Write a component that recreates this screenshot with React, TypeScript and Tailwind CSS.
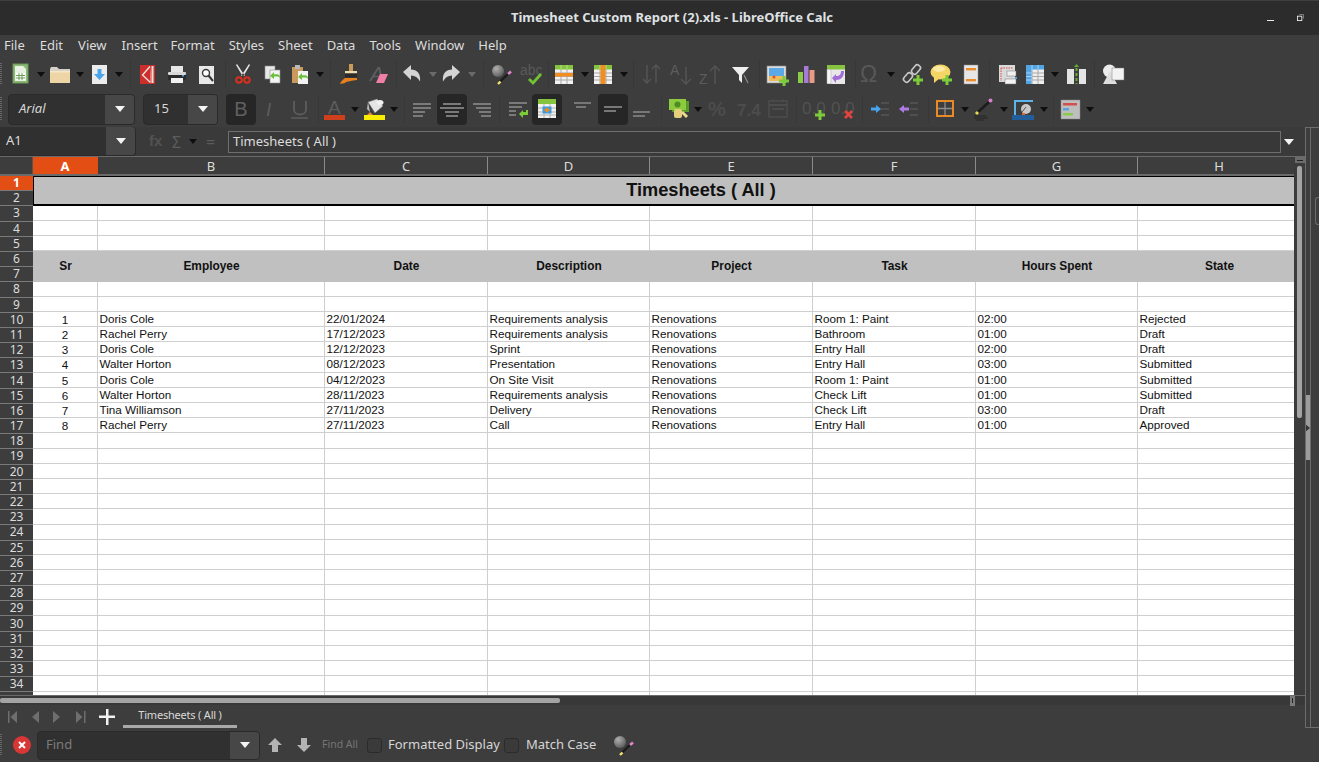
import React from "react";

const UI = "font-['Noto_Sans',sans-serif]";
const CELL = "font-['Liberation_Sans',Arial,sans-serif]";

const S = ({ c = "", children }: { c?: string; children?: React.ReactNode }) => (
  <div className={`flex items-center justify-center w-6 h-6 shrink-0 ${c}`}>{children}</div>
);
const Box = ({ c = "", children }: { c?: string; children?: React.ReactNode }) => (
  <div className={`flex items-center justify-center w-[30px] h-[31px] shrink-0 rounded-[4px] bg-[#262626] ${c}`}>{children}</div>
);
const Sep = ({ c = "" }: { c?: string }) => <div className={`w-px h-[28px] shrink-0 bg-[#383838] ${c}`} />;
const Arrow = ({ c = "", dim = false }: { c?: string; dim?: boolean }) => (
  <div className={`flex items-center justify-center w-2 h-6 shrink-0 ${c}`}>
    <svg width="8" height="5" viewBox="0 0 8 5"><path d="M0 0h8L4 5z" fill={dim ? "#6a6a6a" : "#0e0e0e"} /></svg>
  </div>
);
const I = ({ children }: { children: React.ReactNode }) => (
  <svg width="24" height="24" viewBox="0 0 24 24" className="block">{children}</svg>
);
const Plus = ({ x, y }: { x: number; y: number }) => (
  <path d={`M${x - 1.5} ${y - 5}h3v3.5h3.5v3h-3.5v3.5h-3v-3.5h-3.5v-3h3.5z`} fill="#7ccb3a" />
);
const GArrow = ({ x, y }: { x: number; y: number }) => (
  <path d={`M${x} ${y}l4-4v2.2h3c2 0 3 1.5 3 4 -1-1.3-2-1.6-3-1.6h-3v2.4z`} fill="#6cbf3a" />
);
const TableBase = () => (
  <>
    <rect x="3" y="3" width="18" height="19" fill="#f2f2f2" />
    <path d="M3 11h18M3 14.5h18M3 18h18M9 7v15M15 7v15" stroke="#a8a8a8" strokeWidth="1" />
    <rect x="3" y="3" width="18" height="4.5" fill="#86c440" />
    <path d="M9 3v4.5M15 3v4.5" stroke="#b6e08a" />
  </>
);
const Lines = ({ y, x1, x2, x3, x4, x5, x6, color = "#7a7a7a" }: { y: number; x1: number; x2: number; x3: number; x4: number; x5: number; x6: number; color?: string }) => (
  <path d={`M${x1} ${y}H${x2}M${x3} ${y + 4}H${x4}M${x5} ${y + 8}H${x6}`} stroke={color} strokeWidth="2" />
);
const DimText = ({ t, x, y, s = 15, w = 400, it = false, f = "#5c5c5c" }: { t: string; x: number; y: number; s?: number; w?: number; it?: boolean; f?: string }) => (
  <text x={x} y={y} fontSize={s} fontWeight={w} fontStyle={it ? "italic" : "normal"} fill={f} fontFamily="'Liberation Sans',sans-serif">{t}</text>
);

/* toolbar 1 icons */
const NewDoc = () => <I><rect x="5" y="2" width="15" height="19" fill="#8cb977" stroke="#6d9a58" /><path d="M7 4h8l3 3v12H7z" fill="#e9f1e2" /><rect x="8" y="11" width="9" height="7" fill="#fff" /><path d="M8 13.5h9M8 16h9M11 11v7M14 11v7" stroke="#6b9a55" /></I>;
const Folder = () => <I><path d="M2 7l1-2h6l2 2h11v4H2z" fill="#d6d2c8" /><path d="M2 9h20v12H2z" fill="#eed5a5" /><path d="M2 9h20v1.5H2z" fill="#f7e7c6" /></I>;
const Save = () => <I><rect x="5" y="3" width="15" height="19" fill="#ececec" /><path d="M10.5 7h4v5H18l-5.5 6L7 12h3.500z" fill="#4aa5ec" /></I>;
const Pdf = () => <I><rect x="5" y="3" width="15" height="19" fill="#cc2f2b" /><path d="M15 4.500L7.500 13l8 7.500" fill="none" stroke="#f4dcd8" strokeWidth="1.400" /><path d="M17.500 4v17" stroke="#f4dcd8" strokeWidth="2" /><path d="M15 4.500l2 16-1.500 0z" fill="#e89a94" /></I>;
const Printer = () => <I><rect x="6" y="4" width="12" height="6" fill="#e6e6e6" /><rect x="3" y="10" width="18" height="8" rx="1.500" fill="#2b2b2b" /><rect x="3" y="10" width="18" height="3" rx="1" fill="#d8d8d8" /><rect x="17" y="13" width="2" height="1.500" fill="#4aa5ec" /><rect x="6" y="16" width="12" height="5" fill="#f0f0f0" /></I>;
const Preview = () => <I><rect x="5" y="4" width="15" height="18" fill="#e8e8e8" /><circle cx="12" cy="11" r="3.500" fill="#fff" stroke="#3a3a3a" strokeWidth="1.400" /><path d="M14.500 13.500L19 19" stroke="#333" strokeWidth="2" /></I>;
const Cut = () => <I><path d="M6 2l8 12h-2.500L5 3zM18 2l-8 12h2.500L19 3z" fill="#e4e4e4" /><circle cx="8" cy="18" r="2.800" fill="none" stroke="#d8301c" strokeWidth="2" /><circle cx="16" cy="18" r="2.800" fill="none" stroke="#d8301c" strokeWidth="2" /></I>;
const Copy = () => <I><rect x="5" y="4" width="10" height="13" fill="#e8e8e8" stroke="#8a8a8a" strokeWidth=".6" /><rect x="10" y="8" width="10" height="13" fill="#f4f4f4" stroke="#8a8a8a" strokeWidth=".6" /><GArrow x={10} y={14} /></I>;
const Paste = () => <I><rect x="4" y="5" width="11" height="16" fill="#c99a5c" /><rect x="7" y="3" width="5" height="4" fill="#b8b8b8" /><rect x="10" y="9" width="10" height="13" fill="#f2f2f2" /><GArrow x={10} y={15} /></I>;
const Clone = () => <I><rect x="12" y="2" width="4" height="7" fill="#c89c56" /><rect x="8" y="9" width="12" height="2.500" fill="#eedcb0" /><rect x="8" y="11.500" width="12" height="4" fill="#2a2a2a" /><path d="M8 16h12v2c-5 1-10 1-12 3 -2 .5-4 1-5 .5 1-2 3-4 5-5.500z" fill="#e8801f" /></I>;
const Clear = () => <I><DimText t="A" x={4} y={19} s={21} it f="#5e5e5e" /><path d="M14 12h8l-4 9h-8z" fill="#ef7fa8" /></I>;
const Undo = () => <I><path d="M3 10l8-7v4.500c6 0 10 4 9 12 -2-4-5-6-9-6v4.500z" fill="#d4d4d4" /></I>;
const Redo = () => <I><path d="M21 10l-8-7v4.500c-6 0-10 4-9 12 2-4 5-6 9-6v4.500z" fill="#d4d4d4" /></I>;
const Wand = () => <I><defs><radialGradient id="ball" cx=".35" cy=".3" r=".8"><stop offset="0" stopColor="#b0b0b0" /><stop offset="1" stopColor="#555" /></radialGradient></defs><circle cx="9" cy="9" r="6" fill="url(#ball)" /><path d="M10.500 20L20 11" stroke="#1c1c1c" strokeWidth="2.400" /><path d="M9 22l2.500-2.500" stroke="#f0e070" strokeWidth="2.400" /><path d="M19 12l3-2.500" stroke="#e586cc" strokeWidth="2.600" /></I>;
const Spell = () => <I><DimText t="abc" x={0} y={13} s={14} f="#5a5a5a" /><path d="M9 17l4 4 8-9" fill="none" stroke="#72c234" strokeWidth="2.800" /></I>;
const RowIc = () => <I><TableBase /><rect x="3" y="11" width="18" height="3.500" fill="#f28d1f" /></I>;
const ColIc = () => <I><TableBase /><rect x="9.500" y="3" width="5" height="19" fill="#f28d1f" /></I>;
const Sort = () => <I><path d="M7 3v18M3 17l4 4 4-4M16 21V3M12 7l4-4 4 4" fill="none" stroke="#555" strokeWidth="1.400" /></I>;
const Asc = () => <I><DimText t="A" x={0} y={13} s={14} /><path d="M16 5v17M11 17l5 5 5-5" fill="none" stroke="#555" strokeWidth="1.400" /></I>;
const Desc = () => <I><DimText t="Z" x={0} y={22} s={14} /><path d="M16 22V4M11 9l5-5 5 5" fill="none" stroke="#555" strokeWidth="1.400" /></I>;
const Filter = () => <I><path d="M3 5h17l-7 8v8l-3-3v-5z" fill="#efefef" /><path d="M15 13l4 8" stroke="#8a8a8a" strokeWidth="1.200" /></I>;
const ImageIc = () => <I><rect x="2" y="4" width="19" height="17" fill="#dcdcdc" stroke="#8a8a8a" strokeWidth=".6" /><rect x="4" y="6" width="15" height="8" fill="#5ba9e6" /><rect x="4" y="14" width="15" height="5" fill="#edbc5e" /><circle cx="9" cy="15" r="1.500" fill="#e0552e" /><Plus x={19} y={19} /></I>;
const Chart = () => <I><rect x="4" y="10" width="5" height="11" fill="#8ccb4a" /><rect x="10" y="4" width="4.500" height="17" fill="#a77cd8" /><rect x="15.500" y="8" width="5" height="13" fill="#e89a84" /></I>;
const Pivot = () => <I><rect x="3" y="3" width="18" height="19" fill="#e8e8e8" /><rect x="3" y="3" width="18" height="4.500" fill="#86c440" /><rect x="3" y="7.500" width="4" height="14" fill="#f6f6f6" stroke="#aaa" strokeWidth=".5" /><path d="M8 16l4-4v2c4 0 5-2 5-5h3c0 6-3 9-8 9v3z" fill="#a16fd6" /></I>;
const Omega = () => <I><DimText t="Ω" x={1} y={20} s={23} f="#585858" /></I>;
const LinkIc = () => (
  <I>
    <rect x="13" y="2.500" width="6" height="10" rx="2.500" transform="rotate(40 16 7.500)" fill="none" stroke="#c8c8c8" strokeWidth="1.600" />
    <rect x="5" y="10.500" width="6" height="10" rx="2.500" transform="rotate(40 8 15.500)" fill="none" stroke="#c8c8c8" strokeWidth="1.600" />
    <Plus x={18} y={18} />
  </I>
);
const Comment = () => <I><ellipse cx="11.500" cy="10" rx="10" ry="7.500" fill="#f4d565" /><path d="M5 15v6l6-5z" fill="#f4d565" /><ellipse cx="10" cy="7" rx="6" ry="3" fill="#fbeaa6" /><Plus x={18} y={18} /></I>;
const HeaderIc = () => <I><rect x="5" y="3" width="14" height="19" fill="#e6e6e6" stroke="#8a8a8a" strokeWidth=".5" /><rect x="7" y="6" width="10" height="2.400" fill="#ea8d2c" /><rect x="7" y="17" width="10" height="2.400" fill="#ea8d2c" /></I>;
const PrintArea = () => <I><rect x="3" y="3" width="16" height="17" fill="#dadada" /><path d="M5 6h12M5 6v13" stroke="#d04a4a" strokeDasharray="1.500 1" /><rect x="11" y="9" width="9" height="5" fill="#f0f0f0" stroke="#777" strokeWidth=".5" /><rect x="9" y="17" width="11" height="5" fill="#f4f4f4" stroke="#777" strokeWidth=".5" /><rect x="19" y="15" width="2" height="2" fill="#4aa5ec" /></I>;
const Freeze = () => <I><rect x="3" y="3" width="18" height="19" fill="#eee" /><path d="M3 11h18M3 14.500h18M3 18h18M9 3v19M15 3v19" stroke="#a8a8a8" /><rect x="3" y="3" width="18" height="4.500" fill="#53a4e2" /><rect x="3" y="3" width="5.500" height="19" fill="#53a4e2" /><path d="M3 11h6M3 14.500h6M3 18h6M9 3v5M15 3v5" stroke="#a5d2f4" /></I>;
const Split = () => <I><rect x="3" y="7" width="7" height="15" fill="#e4e4e4" /><rect x="15" y="7" width="7" height="15" fill="#e4e4e4" /><path d="M12.500 6v16" stroke="#66b02f" strokeWidth="2" strokeDasharray="3 2" /><path d="M10 5l2.500-3 2.500 3z" fill="#66b02f" /></I>;
const Shapes = () => <I><circle cx="8.500" cy="9" r="6.500" fill="#ececec" /><path d="M9 9l7 13H2z" fill="#dedede" /><rect x="11" y="6" width="12" height="12" fill="#f3f3f3" stroke="#777" strokeWidth=".5" /></I>;

/* toolbar 2 icons */
const Bold = () => <span className={`${CELL} text-[20px] leading-none text-[#606060]`}>B</span>;
const ItalicIc = () => <I><DimText t="I" x={8} y={19} s={19} it f="#5c5c5c" /></I>;
const UnderIc = () => <I><path d="M6 4v9c0 6 12 6 12 0V4" fill="none" stroke="#5c5c5c" strokeWidth="1.800" /><path d="M3 21h17" stroke="#5c5c5c" strokeWidth="1.500" /></I>;
const FontColor = () => <I><DimText t="A" x={5} y={17} s={19} f="#5c5c5c" /><rect x="1" y="18" width="21" height="5" fill="#d03f1c" /></I>;
const BgColor = () => <I><path d="M6 5l9-3 6 7-8 7z" fill="#e4e4e4" stroke="#777" strokeWidth=".6" /><ellipse cx="18" cy="5.500" rx="3.500" ry="2.500" fill="#f2f2f2" /><path d="M6 5l-1 7 3 3z" fill="#bdbdbd" /><path d="M8 15l3 3H5z" fill="#e08a3a" /><rect x="2" y="18" width="21" height="5" fill="#f8ec00" /></I>;
const AlL = () => <I><Lines y={7} x1={3} x2={21} x3={3} x4={21} x5={3} x6={15} /><path d="M3 19h10" stroke="#7a7a7a" strokeWidth="2" /></I>;
const AlC = () => <I><Lines y={7} x1={3} x2={21} x3={0} x4={24} x5={5} x6={19} /><path d="M6 19h12" stroke="#7a7a7a" strokeWidth="2" /></I>;
const AlR = () => <I><Lines y={7} x1={3} x2={21} x3={6} x4={21} x5={9} x6={21} /><path d="M11 19h10" stroke="#7a7a7a" strokeWidth="2" /></I>;
const Wrap = () => <I><Lines y={6} x1={3} x2={21} x3={3} x4={16} x5={3} x6={10} /><path d="M3 18h7" stroke="#7a7a7a" strokeWidth="2" /><path d="M13 17l4-4v2h3v-2h2v5h-5v3z" fill="#7ccb3a" /></I>;
const Merge = () => <I><rect x="3" y="2" width="18" height="19" fill="#f2f2f2" /><path d="M3 11h18M3 15h18M3 18h18M9 7v14M15 7v14" stroke="#b0b0b0" /><rect x="3" y="2" width="18" height="5" fill="#86c440" /><rect x="7.500" y="9.500" width="9" height="7" fill="#3d9ae0" /><path d="M12 10.500l-3 2.500 3 2.500zM12 10.500l3 2.500-3 2.500z" fill="#f28a1e" /></I>;
const VTop = () => <I><path d="M3 6h17M5 10h10" stroke="#777" strokeWidth="2" /></I>;
const VMid = () => <I><path d="M3 10h18M3 14h12" stroke="#777" strokeWidth="2" /></I>;
const VBot = () => <I><path d="M3 15h17M3 19h12" stroke="#777" strokeWidth="2" /></I>;
const Currency = () => <I><rect x="6" y="4" width="17" height="11" fill="#5a9a2a" /><rect x="3" y="2" width="17" height="11" fill="#8ccb3e" /><circle cx="11.500" cy="7.500" r="3" fill="#4f8c22" /><rect x="8" y="12" width="8" height="9" rx="2" fill="#e6cf7c" /><path d="M16 15l5 5" stroke="#e8d890" strokeWidth="3" /></I>;
const Percent = () => <I><DimText t="%" x={1} y={19} s={20} w={700} f="#4c4c4c" /></I>;
const Num = () => <I><DimText t="7.4" x={0} y={19} s={17} w={700} f="#4c4c4c" /></I>;
const DateIc = () => <I><rect x="3" y="4" width="18" height="16" fill="none" stroke="#4c4c4c" strokeWidth="1.500" /><path d="M3 8h18" stroke="#4c4c4c" strokeWidth="2" /><path d="M6 11h12v2H6z" fill="#4c4c4c" /><path d="M7 2v3M17 2v3" stroke="#4c4c4c" /></I>;
const AddDec = () => <I><DimText t="0.0" x={0} y={17} s={17} f="#525252" /><Plus x={18} y={18} /></I>;
const DelDec = () => <I><DimText t="0.0" x={0} y={17} s={17} f="#525252" /><path d="M14 14l7 7M21 14l-7 7" stroke="#e0443c" strokeWidth="2.600" /></I>;
const Indent = () => <I><path d="M13 6h8M13 12h8M13 18h8" stroke="#565656" strokeWidth="1.500" /><path d="M3 10.500h5V8l5 4-5 4v-2.500H3z" fill="#45a5ee" /></I>;
const Outdent = () => <I><path d="M13 6h8M13 12h8M13 18h8" stroke="#565656" strokeWidth="1.500" /><path d="M12 10.500H7V8l-5 4 5 4v-2.500h5z" fill="#b07ae6" /></I>;
const Borders = () => <I><rect x="4" y="4" width="16" height="15" fill="none" stroke="#ea8a25" strokeWidth="2" /><path d="M12 5v13M5 11.500h14" stroke="#8c8c8c" strokeWidth="1.300" /></I>;
const Pen = () => <I><path d="M6 16L18 5" stroke="#1c1c1c" strokeWidth="2.500" /><circle cx="19.500" cy="3.500" r="2" fill="#d97ed0" /><path d="M5 17l2-2" stroke="#e8d850" strokeWidth="3" /><path d="M3 19h12M3 21h14M5 23h8" stroke="#262626" /></I>;
const BorderColor = () => <I><path d="M3 19V4h18" fill="none" stroke="#5bb4ec" strokeWidth="2" /><circle cx="14" cy="12" r="5" fill="#c8c8c8" /><path d="M10 15l4-5" stroke="#555" /><rect x="0" y="18" width="22" height="5" fill="#235e9c" /><path d="M10 16h3v2h-3z" fill="#d9682a" /></I>;
const Cond = () => <I><rect x="3" y="3" width="19" height="19" fill="#bebebe" stroke="#888" strokeWidth=".5" /><rect x="5" y="6" width="14" height="2.500" fill="#d24f4f" /><rect x="5" y="11" width="6" height="2.500" fill="#5aa5e0" /><rect x="5" y="16" width="10" height="2.500" fill="#8ccb4a" /></I>;

const White = () => <svg width="10" height="6" viewBox="0 0 10 6"><path d="M0 0h10L5 6z" fill="#f4f4f4" /></svg>;

const Combo = ({ w, arrowW, label, italic = false, ml = "" }: { w: string; arrowW: string; label: string; italic?: boolean; ml?: string }) => (
  <div className={`flex h-[31px] shrink-0 rounded-[4px] border border-[#2a2a2a] bg-[#303030] overflow-hidden ${w} ${ml}`}>
    <div className={`flex-1 flex items-center pl-[10px] text-[13px] text-[#d6d6d6] ${italic ? "italic" : ""} ${UI}`}>{label}</div>
    <div className={`flex items-center justify-center bg-[#474747] ${arrowW}`}><White /></div>
  </div>
);

const Grip = () => (
  <div className="absolute left-0 top-[6px] bottom-[6px] w-[2px] bg-[repeating-linear-gradient(to_bottom,#666_0,#666_1px,transparent_1px,transparent_2px)]" />
);

const COLS = "grid grid-cols-[65px_227px_163px_162px_163px_163px_162px_163px]";
const LETTERS = ["A", "B", "C", "D", "E", "F", "G", "H"];
const HEAD = ["Sr", "Employee", "Date", "Description", "Project", "Task", "Hours Spent", "State"];
const DATA = [
  ["1", "Doris Cole", "22/01/2024", "Requirements analysis", "Renovations", "Room 1: Paint", "02:00", "Rejected"],
  ["2", "Rachel Perry", "17/12/2023", "Requirements analysis", "Renovations", "Bathroom", "01:00", "Draft"],
  ["3", "Doris Cole", "12/12/2023", "Sprint", "Renovations", "Entry Hall", "02:00", "Draft"],
  ["4", "Walter Horton", "08/12/2023", "Presentation", "Renovations", "Entry Hall", "03:00", "Submitted"],
  ["5", "Doris Cole", "04/12/2023", "On Site Visit", "Renovations", "Room 1: Paint", "01:00", "Submitted"],
  ["6", "Walter Horton", "28/11/2023", "Requirements analysis", "Renovations", "Check Lift", "01:00", "Submitted"],
  ["7", "Tina Williamson", "27/11/2023", "Delivery", "Renovations", "Check Lift", "03:00", "Draft"],
  ["8", "Rachel Perry", "27/11/2023", "Call", "Renovations", "Entry Hall", "01:00", "Approved"],
];

const BlankRow = ({ n }: { n: number }) => (
  <div className={`${COLS} h-[15.2px] shrink-0`}>
    {LETTERS.map((l) => <div key={l + n} className="border-r border-b border-[#cfcfcf]" />)}
  </div>
);

const Check = () => <div className="w-[15px] h-[15px] shrink-0 rounded-[3px] border border-[#2b2b2b] bg-[#3a3a3a]" />;

export default function App() {
  const rowNums = Array.from({ length: 34 }, (_, i) => i + 1);
  return (
    <div className={`w-[1319px] h-[762px] overflow-hidden flex flex-col bg-[#3d3d3d] ${UI}`}>
      {/* title bar */}
      <div className="h-[35px] shrink-0 relative flex items-center justify-center pl-[25px] bg-[#2c2c2c] border-t border-[#3f3f3f]">
        <span className="text-[13px] font-bold text-[#dfe1e3]">Timesheet Custom Report (2).xls - LibreOffice Calc</span>
        <div className="absolute right-[15px] top-[13px] flex items-center gap-[23px]">
          <div className="w-[7px] h-px bg-[#e8e8e8] mt-[6px]" />
          <svg width="7" height="7" viewBox="0 0 8 8" className="block"><path d="M2.500.5h5v5" fill="none" stroke="#888" /><rect x=".5" y="2.500" width="5" height="5" fill="none" stroke="#eee" /></svg>
        </div>
      </div>
      {/* menu */}
      <div className="h-[22px] shrink-0 flex items-center pl-[4px] text-[13px] text-[#dcdcdc] bg-[#3d3d3d]">
        <span>File</span>
        <span className="ml-[15px]">Edit</span>
        <span className="ml-[15px]">View</span>
        <span className="ml-[15px]">Insert</span>
        <span className="ml-[13px]">Format</span>
        <span className="ml-[14px]">Styles</span>
        <span className="ml-[14px]">Sheet</span>
        <span className="ml-[14px]">Data</span>
        <span className="ml-[14px]">Tools</span>
        <span className="ml-[14px]">Window</span>
        <span className="ml-[14px]">Help</span>
      </div>
      {/* toolbar 1 */}
      <div className="h-[34px] shrink-0 relative flex items-center">
        <Grip />
        <S c="ml-[8px]"><NewDoc /></S><Arrow c="ml-[5px]" />
        <S c="ml-[3px]"><Folder /></S><Arrow c="ml-[4px]" />
        <S c="ml-[3px]"><Save /></S><Arrow c="ml-[4px]" />
        <Sep c="ml-[7px]" />
        <S c="ml-[4px]"><Pdf /></S>
        <S c="ml-[6px]"><Printer /></S>
        <S c="ml-[5px]"><Preview /></S>
        <Sep c="ml-[7px]" />
        <S c="ml-[5px]"><Cut /></S>
        <S c="ml-[5px]"><Copy /></S>
        <S c="ml-[4px]"><Paste /></S><Arrow c="ml-[4px]" />
        <Sep c="ml-[6px]" />
        <S c="ml-[6px]"><Clone /></S>
        <S c="ml-[5px]"><Clear /></S>
        <Sep c="ml-[6px]" />
        <S c="ml-[3px]"><Undo /></S><Arrow c="ml-[5px]" dim />
        <S c="ml-[2px]"><Redo /></S><Arrow c="ml-[5px]" dim />
        <Sep c="ml-[7px]" />
        <S c="ml-[5px]"><Wand /></S>
        <S c="ml-[7px]"><Spell /></S>
        <Sep c="ml-[4px]" />
        <S c="ml-[3px]"><RowIc /></S><Arrow c="ml-[5px]" />
        <S c="ml-[2px]"><ColIc /></S><Arrow c="ml-[5px]" />
        <Sep c="ml-[5px]" />
        <S c="ml-[6px]"><Sort /></S>
        <S c="ml-[6px]"><Asc /></S>
        <S c="ml-[5px]"><Desc /></S>
        <S c="ml-[6px]"><Filter /></S>
        <Sep c="ml-[6px]" />
        <S c="ml-[5px]"><ImageIc /></S>
        <S c="ml-[5px]"><Chart /></S>
        <S c="ml-[6px]"><Pivot /></S>
        <Sep c="ml-[7px]" />
        <S c="ml-[3px]"><Omega /></S><Arrow c="ml-[4px]" />
        <S c="ml-[5px]"><LinkIc /></S>
        <S c="ml-[5px]"><Comment /></S>
        <S c="ml-[6px]"><HeaderIc /></S>
        <Sep c="ml-[6px]" />
        <S c="ml-[6px]"><PrintArea /></S>
        <S c="ml-[3px]"><Freeze /></S><Arrow c="ml-[4px]" />
        <S c="ml-[5px]"><Split /></S>
        <Sep c="ml-[6px]" />
        <S c="ml-[6px]"><Shapes /></S>
      </div>
      {/* toolbar 2 */}
      <div className="h-[36px] shrink-0 relative flex items-center">
        <Grip />
        <Combo w="w-[127px]" arrowW="w-[29px]" label="Arial" italic ml="ml-[8px]" />
        <Combo w="w-[75px]" arrowW="w-[29px]" label="15" ml="ml-[8px]" />
        <Box c="ml-[8px]"><Bold /></Box>
        <S c="ml-[2px]"><ItalicIc /></S>
        <S c="ml-[6px]"><UnderIc /></S>
        <Sep c="ml-[6px]" />
        <S c="ml-[4px]"><FontColor /></S><Arrow c="ml-[4px]" />
        <S c="ml-[3px]"><BgColor /></S><Arrow c="ml-[4px]" />
        <Sep c="ml-[6px]" />
        <S c="ml-[5px]"><AlL /></S>
        <Box c="ml-[3px]"><AlC /></Box>
        <S c="ml-[3px]"><AlR /></S>
        <Sep c="ml-[5px]" />
        <S c="ml-[6px]"><Wrap /></S>
        <Box c="ml-[2px]"><Merge /></Box>
        <S c="ml-[9px]"><VTop /></S>
        <Box c="ml-[3px]"><VMid /></Box>
        <S c="ml-[2px]"><VBot /></S>
        <Sep c="ml-[7px]" />
        <S c="ml-[4px]"><Currency /></S><Arrow c="ml-[4px]" />
        <S c="ml-[5px]"><Percent /></S>
        <S c="ml-[6px]"><Num /></S>
        <S c="ml-[5px]"><DateIc /></S>
        <Sep c="ml-[6px]" />
        <S c="ml-[5px]"><AddDec /></S>
        <S c="ml-[5px]"><DelDec /></S>
        <Sep c="ml-[7px]" />
        <S c="ml-[5px]"><Indent /></S>
        <S c="ml-[5px]"><Outdent /></S>
        <Sep c="ml-[7px]" />
        <S c="ml-[4px]"><Borders /></S><Arrow c="ml-[4px]" />
        <S c="ml-[2px]"><Pen /></S><Arrow c="ml-[5px]" />
        <S c="ml-[4px]"><BorderColor /></S><Arrow c="ml-[4px]" />
        <Sep c="ml-[5px]" />
        <S c="ml-[4px]"><Cond /></S><Arrow c="ml-[4px]" />
      </div>
      {/* body */}
      <div className="flex-1 min-h-0 flex">
        <div className="w-[1305px] flex flex-col">
          {/* formula bar */}
          <div className="h-[30px] shrink-0 flex items-center border-b border-[#6a6a6a] bg-[#3a3a3a]">
            <div className="w-[136px] h-[29px] flex rounded-r-[4px] border-r border-b border-[#2a2a2a] bg-[#303030] overflow-hidden">
              <div className="flex-1 flex items-center pl-[6px] text-[13px] text-[#dcdcdc]">A1</div>
              <div className="w-[29px] flex items-center justify-center bg-[#474747]"><White /></div>
            </div>
            <div className="w-[92px] flex items-center">
              <span className={`ml-[13px] w-[16px] text-[15px] font-bold text-[#525252] ${CELL}`}>fx</span>
              <span className="ml-[7px] w-[14px] text-[16px] text-[#5c5c5c]">Σ</span>
              <Arrow c="ml-[3px]" />
              <span className="ml-[9px] text-[16px] text-[#5c5c5c]">=</span>
            </div>
            <div className="w-[1053px] h-[22px] flex items-center pl-[4px] text-[13px] text-[#dcdcdc] border border-[#6e6e6e] bg-[#383838]">Timesheets ( All )</div>
            <div className="ml-[3px]"><White /></div>
          </div>
          {/* sheet */}
          <div className="h-[538px] shrink-0 flex overflow-hidden">
            <div className="w-[1294px] flex flex-col">
              {/* col header */}
              <div className="h-[19px] shrink-0 flex border-b-2 border-[#6a6a6a] overflow-hidden">
                <div className="w-[30px] h-[18px] border-r border-[#555] ml-[3px] bg-[#3d3d3d]" />
                <div className={`${COLS} flex-1 min-w-0`}>
                  {LETTERS.map((l, i) => (
                    <div key={l} className={`flex items-center justify-center text-[13px] border-r border-[#8a8a8a] ${i === 0 ? "bg-[#e34e15] text-white font-bold border-[#e34e15]" : "text-[#dcdcdc]"}`}>{l}</div>
                  ))}
                </div>
              </div>
              <div className="flex-1 min-h-0 flex">
                {/* row header */}
                <div className="w-[33px] shrink-0 flex flex-col">
                  {rowNums.map((n) => (
                    <div key={n} className={`h-[15.2px] shrink-0 flex items-center justify-center text-[12px] leading-none border-b border-[#7a7a7a] ${n === 1 ? "bg-[#e34e15] text-white font-bold" : "bg-[#3d3d3d] text-[#dcdcdc]"}`}>{n}</div>
                  ))}
                </div>
                {/* cells */}
                <div className={`flex-1 min-w-0 bg-white flex flex-col overflow-hidden ${CELL} text-black`}>
                  <div className="h-[29.6px] shrink-0 flex items-center justify-center pl-[74px] bg-[#bfbfbf] border-l border-t border-black border-b-2 text-[18.2px] font-bold text-[#111]">Timesheets ( All )</div>
                  {[3, 4, 5].map((n) => <BlankRow key={n} n={n} />)}
                  <div className={`${COLS} h-[30.4px] shrink-0 bg-[#c0c0c0] text-[11.9px] font-bold text-[#111]`}>
                    {HEAD.map((h) => <div key={h} className="flex items-center justify-center pt-[1px]">{h}</div>)}
                  </div>
                  {[8, 9].map((n) => <BlankRow key={n} n={n} />)}
                  {DATA.map((r) => (
                    <div key={r[0]} className={`${COLS} h-[15.2px] shrink-0 text-[11.7px] leading-[14px] text-[#111]`}>
                      {r.map((c, i) => (
                        <div key={i} className={`border-r border-b border-[#cfcfcf] overflow-hidden whitespace-nowrap ${i === 0 ? "text-center pt-[1px]" : "pl-[1.5px]"}`}>{c}</div>
                      ))}
                    </div>
                  ))}
                  {Array.from({ length: 18 }, (_, i) => <BlankRow key={i + 18} n={i + 18} />)}
                </div>
              </div>
            </div>
            {/* vertical scrollbar */}
            <div className="w-[11px] shrink-0 flex flex-col items-center bg-[#3b3b3b]">
              <div className="w-[10px] h-[6px] flex items-center justify-center bg-[#6b6b6b]"><div className="w-[6px] h-px bg-[#222]" /></div>
              <div className="w-[5px] h-[252px] mt-[3px] rounded-[2px] bg-[#a4a4a4]" />
            </div>
          </div>
          {/* horizontal scrollbar */}
          <div className="h-[10px] shrink-0 flex items-center bg-[#383838] border-t border-[#6a6a6a]">
            <div className="w-[560px] h-[5px] rounded-[2px] bg-[#a4a4a4]" />
            <div className="ml-[730px] w-[5px] h-[10px] flex items-center justify-center bg-[#7a7a7a]"><div className="w-px h-[5px] bg-[#222]" /></div>
          </div>
          {/* tabs */}
          <div className="flex-1 min-h-0 flex items-center">
            <svg width="14" height="14" viewBox="0 0 14 14" className="ml-[6px]"><path d="M2 1h1.500v12H2zM11 1v12L4.500 7z" fill="#6e6e6e" /></svg>
            <svg width="10" height="14" viewBox="0 0 10 14" className="ml-[10px]"><path d="M9 1v12L2 7z" fill="#6e6e6e" /></svg>
            <svg width="10" height="14" viewBox="0 0 10 14" className="ml-[12px]"><path d="M1 1v12l7-6z" fill="#6e6e6e" /></svg>
            <svg width="14" height="14" viewBox="0 0 14 14" className="ml-[11px]"><path d="M3 1v12l6.500-6zM11 1h1.500v12H11z" fill="#6e6e6e" /></svg>
            <svg width="16" height="16" viewBox="0 0 16 16" className="ml-[12px]"><path d="M7 0h2.500v6.500H16V9H9.500v7H7V9H0V6.500h7z" fill="#f2f2f2" /></svg>
            <div className="ml-[8px] w-[114px] h-full flex items-center justify-center text-[11px] tracking-[-0.2px] text-[#d8d8d8] border-b-[3px] border-[#a8a8a8]">Timesheets ( All )</div>
          </div>
        </div>
        {/* right strip */}
        <div className="w-[14px] shrink-0 h-[601px] flex border-t border-l border-b border-[#6c6c6c]">
          <div className="w-[5px] h-full flex flex-col border-r border-[#6c6c6c]">
            <div className="h-[267px] shrink-0" />
            <div className="h-[65px] shrink-0 flex items-center bg-[#9c9c9c]">
              <svg width="5" height="8" viewBox="0 0 5 8"><path d="M0 0v8l5-4z" fill="#333" /></svg>
            </div>
          </div>
          <div className="flex-1 flex flex-col items-end">
            <div className="mt-[69px] w-[4px] h-[28px] rounded-l-[3px] border-l border-t border-b border-[#6c6c6c]" />
          </div>
        </div>
      </div>
      {/* find bar */}
      <div className="h-[34px] shrink-0 relative flex items-center text-[13px]">
        <Grip />
        <svg width="18" height="18" viewBox="0 0 18 18" className="ml-[13px] shrink-0"><circle cx="9" cy="9" r="9" fill="#d93636" /><path d="M6 6l6 6M12 6l-6 6" stroke="#fff" strokeWidth="2" /></svg>
        <div className="ml-[6px] w-[223px] h-[29px] flex rounded-[4px] border border-[#2a2a2a] bg-[#303030] overflow-hidden">
          <div className="flex-1 flex items-center pl-[8px] text-[#7c7c7c]">Find</div>
          <div className="w-[29px] flex items-center justify-center bg-[#474747]"><White /></div>
        </div>
        <svg width="16" height="16" viewBox="0 0 16 16" className="ml-[7px] shrink-0"><path d="M8 1l7 7h-4v7H5V8H1z" fill="#b4b4b4" /></svg>
        <svg width="16" height="16" viewBox="0 0 16 16" className="ml-[13px] shrink-0"><path d="M8 15L1 8h4V1h6v7h4z" fill="#b4b4b4" /></svg>
        <span className="ml-[10px] text-[10.5px] text-[#757575] w-[36px] whitespace-nowrap">Find All</span>
        <div className="ml-[9px]"><Check /></div>
        <span className="ml-[6px] text-[#d6d6d6] whitespace-nowrap">Formatted Display</span>
        <div className="ml-[4px]"><Check /></div>
        <span className="ml-[7px] text-[#d6d6d6] whitespace-nowrap">Match Case</span>
        <div className="ml-[15px]"><Wand /></div>
      </div>
    </div>
  );
}
